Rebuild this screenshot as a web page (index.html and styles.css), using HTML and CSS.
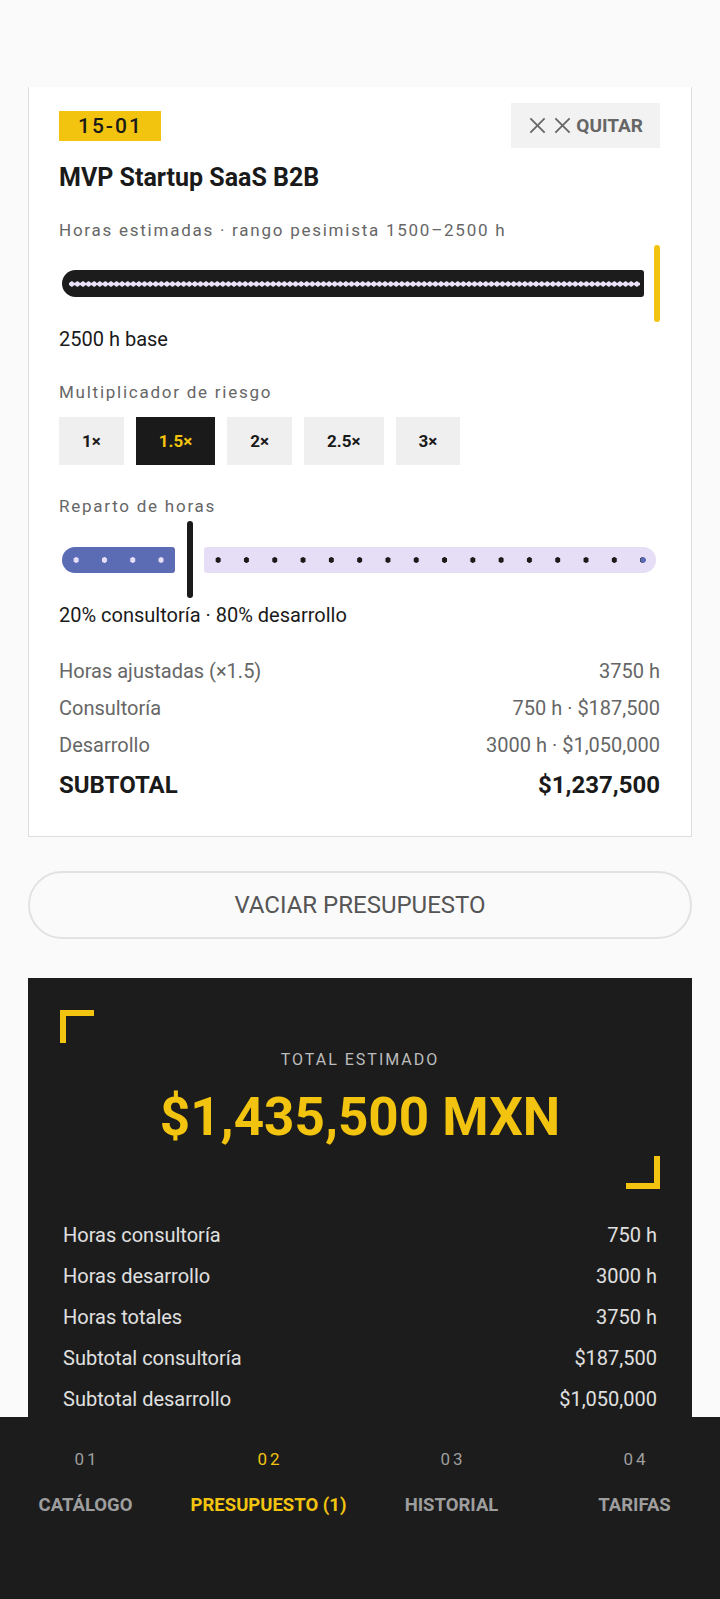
FILE: index.html
```html
<html>
<head>
    <meta charset="UTF-8">
    <title>Presupuesto</title>
    <link rel="stylesheet" href="styles.css">
</head>

<body>
    <div class="topbar"></div>

    <div class="scroll">
        <div class="card">
            <div class="card-head">
                <span class="code">15-01</span>
                <button class="remove">
                    <svg class="x" viewBox="0 0 16 16"><path d="M2 2 L14 14 M14 2 L2 14"/></svg>
                    <svg class="x" viewBox="0 0 16 16"><path d="M2 2 L14 14 M14 2 L2 14"/></svg>
                    QUITAR
                </button>
            </div>
            <h2 class="title">MVP Startup SaaS B2B</h2>

            <p class="label">Horas estimadas · rango pesimista 1500–2500 h</p>
            <div class="slider">
                <div class="track"><div class="ticks"></div></div>
                <div class="thumb"></div>
            </div>
            <p class="value">2500 h base</p>

            <p class="label gap">Multiplicador de riesgo</p>
            <div class="chips">
                <button class="chip">1×</button>
                <button class="chip active">1.5×</button>
                <button class="chip">2×</button>
                <button class="chip">2.5×</button>
                <button class="chip">3×</button>
            </div>

            <p class="label gap">Reparto de horas</p>
            <div class="split">
                <div class="seg-a"></div>
                <div class="handle"></div>
                <div class="seg-b"></div>
            </div>
            <p class="value">20% consultoría · 80% desarrollo</p>

            <div class="rows">
                <div class="row"><span>Horas ajustadas (×1.5)</span><span>3750 h</span></div>
                <div class="row"><span>Consultoría</span><span>750 h · $187,500</span></div>
                <div class="row"><span>Desarrollo</span><span>3000 h · $1,050,000</span></div>
                <div class="row total"><span>SUBTOTAL</span><span>$1,237,500</span></div>
            </div>
        </div>

        <button class="clear">VACIAR PRESUPUESTO</button>

        <div class="summary">
            <div class="hero">
                <span class="corner tl"></span>
                <p class="hero-label">TOTAL ESTIMADO</p>
                <p class="hero-total">$1,435,500 MXN</p>
                <span class="corner br"></span>
            </div>
            <div class="sum-rows">
                <div class="row"><span>Horas consultoría</span><span>750 h</span></div>
                <div class="row"><span>Horas desarrollo</span><span>3000 h</span></div>
                <div class="row"><span>Horas totales</span><span>3750 h</span></div>
                <div class="row"><span>Subtotal consultoría</span><span>$187,500</span></div>
                <div class="row"><span>Subtotal desarrollo</span><span>$1,050,000</span></div>
                <div class="row"><span>IVA (16%)</span><span>$198,000</span></div>
            </div>
        </div>
    </div>

    <nav class="tabs">
        <a class="tab"><span class="num">01</span><span class="name">CATÁLOGO</span></a>
        <a class="tab on"><span class="num">02</span><span class="name">PRESUPUESTO (1)</span></a>
        <a class="tab"><span class="num">03</span><span class="name">HISTORIAL</span></a>
        <a class="tab"><span class="num">04</span><span class="name">TARIFAS</span></a>
    </nav>
</body>
</html>
```

FILE: styles.css
```css
body {
    margin: 0;
    background: #fafafa;
    font-family: Roboto, "Noto Sans", sans-serif;
    color: #1a1a1a;
    overflow: hidden;
}

p, h2 {
    margin: 0;
}

button {
    font-family: inherit;
    border: none;
    cursor: pointer;
}

.topbar {
    height: 87px;
}

.scroll {
    height: 1512px;
    overflow: hidden;
}

/* tarjeta del proyecto */
.card {
    margin: -1px 28px 0;
    padding: 16px 31px 32px 30px;
    background: #ffffff;
    border: 1px solid #dedede;
}

.card-head {
    display: flex;
    justify-content: space-between;
    align-items: center;
    height: 45px;
}

.code {
    background: #f2c40f;
    height: 30px;
    line-height: 30px;
    padding: 0 18px 0 19px;
    font-size: 21px;
    font-weight: 500;
    letter-spacing: 2px;
}

.remove {
    display: flex;
    align-items: center;
    height: 45px;
    padding: 0 17px;
    background: #f2f2f2;
    color: #666666;
    font-size: 19px;
    font-weight: 700;
}

.x {
    width: 19px;
    height: 19px;
    margin-right: 6px;
    fill: none;
    stroke: #666666;
    stroke-width: 1.5;
}

.x + .x {
    margin-right: 4px;
}

.title {
    margin-top: 15px;
    font-size: 25px;
    line-height: 30px;
    font-weight: 700;
}

.label {
    margin-top: 27px;
    font-size: 17px;
    line-height: 20px;
    letter-spacing: 1.75px;
    color: #666666;
}

.label.gap {
    margin-top: 31px;
}

.value {
    margin-top: 5px;
    font-size: 20px;
    line-height: 24px;
}

/* deslizador de horas */
.slider {
    display: flex;
    align-items: center;
    gap: 10px;
    height: 77px;
    margin-top: 5px;
}

.track {
    flex: 1;
    margin-left: 3px;
    height: 27px;
    display: flex;
    align-items: center;
    background: #1c1c1c;
    border-radius: 14px 3px 3px 14px;
}

.ticks {
    flex: 1;
    height: 6px;
    margin: 0 4px 0 7px;
    background: radial-gradient(circle, #e9e2f8 2.4px, transparent 2.9px) 0 0 / 5.6px 6px repeat-x;
}

.thumb {
    width: 6px;
    height: 77px;
    background: #f2c40f;
    border-radius: 3px;
}

.chips {
    display: flex;
    gap: 12px;
    margin-top: 15px;
}

.chip {
    height: 48px;
    padding: 0 23px;
    background: #efefef;
    color: #1a1a1a;
    font-size: 17px;
    font-weight: 700;
}

.chip.active {
    background: #1a1a1a;
    color: #f2c40f;
}

/* reparto consultoría / desarrollo */
.split {
    display: flex;
    align-items: center;
    height: 77px;
    margin-top: 5px;
}

.seg-a {
    width: 113px;
    height: 26px;
    margin-left: 3px;
    border-radius: 13px 3px 3px 13px;
    background: #5b6bb4 radial-gradient(circle, #e6def6 2.5px, transparent 3px) 0 0 / 28.3px 100% repeat-x;
}

.handle {
    width: 6px;
    height: 77px;
    margin: 0 11px 0 12px;
    border-radius: 3px;
    background: #1a1a1a;
}

.seg-b {
    flex: 1;
    height: 26px;
    margin-right: 4px;
    border-radius: 3px 13px 13px 3px;
    background:
        radial-gradient(circle, #5b6bb4 2.5px, transparent 3px) 424.5px 0 / 28.3px 100% no-repeat,
        radial-gradient(circle, #1a1a1a 2.5px, transparent 3px) 0 0 / 28.3px 100% repeat-x,
        #e6def6;
}

.rows {
    margin-top: 26px;
}

.row {
    display: flex;
    justify-content: space-between;
    font-size: 20px;
    line-height: 37px;
    color: #666666;
}

.row.total {
    margin-top: 3px;
    font-size: 24px;
    font-weight: 700;
    color: #1a1a1a;
}

.clear {
    display: block;
    width: 664px;
    height: 68px;
    margin: 34px 28px 0;
    background: transparent;
    border: 2px solid #e2e2e2;
    border-radius: 34px;
    color: #555555;
    font-size: 24px;
}

/* total estimado */
.summary {
    margin: 39px 28px 0;
    padding: 32px 32px 40px;
    background: #1c1c1c;
}

.hero {
    position: relative;
    height: 179px;
    text-align: center;
}

.corner {
    position: absolute;
    width: 28px;
    height: 27px;
    border: 6px solid #f2c40f;
}

.corner.tl {
    top: 0;
    left: 0;
    border-right: none;
    border-bottom: none;
}

.corner.br {
    bottom: 0;
    right: 0;
    border-left: none;
    border-top: none;
}

.hero-label {
    padding-top: 40px;
    font-size: 16px;
    line-height: 20px;
    letter-spacing: 2px;
    color: #bdbdbd;
}

.hero-total {
    margin-top: 17px;
    font-size: 53px;
    line-height: 60px;
    font-weight: 700;
    color: #f2c40f;
}

.sum-rows {
    margin-top: 26px;
    padding: 0 3px;
}

.sum-rows .row {
    line-height: 41px;
    color: #e0e0e0;
}

/* barra inferior */
.tabs {
    position: fixed;
    left: 0;
    right: 0;
    bottom: 0;
    height: 182px;
    background: #1c1c1c;
    display: grid;
    grid-template-columns: repeat(4, 183px);
    justify-content: center;
    align-items: start;
}

.tab {
    display: flex;
    flex-direction: column;
    align-items: center;
    padding-top: 32px;
    color: #9e9e9e;
}

.num {
    font-size: 17px;
    line-height: 20px;
    letter-spacing: 3px;
    margin-right: -3px;
}

.name {
    margin-top: 24px;
    font-size: 18.5px;
    line-height: 24px;
    font-weight: 700;
}

.tab.on {
    color: #f2c40f;
}
```
